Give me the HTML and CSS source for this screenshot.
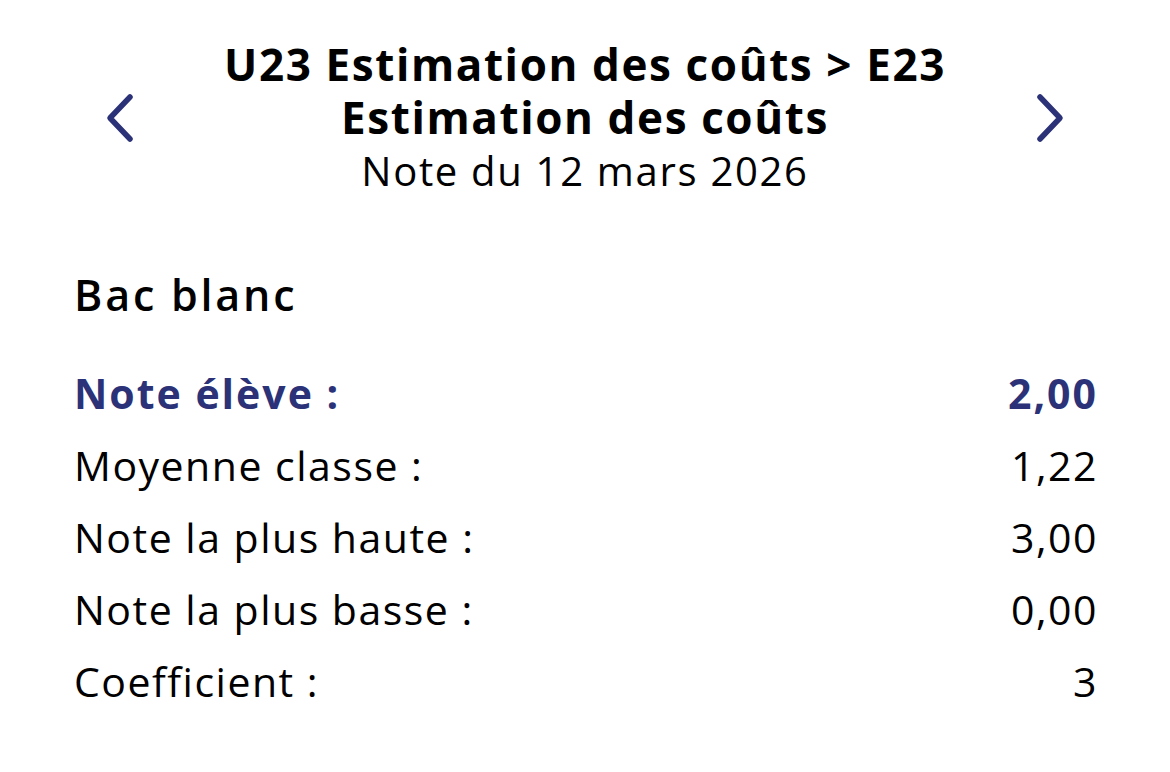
FILE: index.html
```html
<!DOCTYPE html>
<html lang="fr">
<head>
  <meta charset="UTF-8">
  <meta name="viewport" content="width=device-width, initial-scale=1.0">
  <link rel="stylesheet" href="styles.css">
  <title>Note</title>
</head>
<body>
<div class="header">
  <button class="navButton" aria-label="Précédent">
    <svg width="34" height="52" viewBox="0 0 34 52">
      <path d="M28 5 L8 26 L28 47" fill="none" stroke="#2c3277" stroke-width="5.5" stroke-linecap="round" stroke-linejoin="round"/>
    </svg>
  </button>
  <div class="titleBlock">
    <div class="title">U23 Estimation des coûts &gt; E23<br>Estimation des coûts</div>
    <div class="subtitle">Note du 12 mars 2026</div>
  </div>
  <button class="navButton" aria-label="Suivant">
    <svg width="34" height="52" viewBox="0 0 34 52">
      <path d="M6 5 L26 26 L6 47" fill="none" stroke="#2c3277" stroke-width="5.5" stroke-linecap="round" stroke-linejoin="round"/>
    </svg>
  </button>
</div>

<div class="content">
  <h2 class="evalName">Bac blanc</h2>
  <div class="row studentRow">
    <span>Note élève :</span>
    <span class="value">2,00</span>
  </div>
  <div class="row">
    <span>Moyenne classe :</span>
    <span class="value">1,22</span>
  </div>
  <div class="row">
    <span>Note la plus haute :</span>
    <span class="value">3,00</span>
  </div>
  <div class="row">
    <span>Note la plus basse :</span>
    <span class="value">0,00</span>
  </div>
  <div class="row">
    <span>Coefficient :</span>
    <span class="value">3</span>
  </div>
</div>
</body>
</html>
```

FILE: styles.css
```css
body {
  margin: 0;
  background: #fff;
  color: #000;
  font-family: "Open Sans", "Noto Sans", sans-serif;
}

.header {
  display: flex;
  align-items: center;
  justify-content: space-between;
  padding: 38px 102px 0 102px;
}

.navButton {
  border: none;
  background: none;
  padding: 0;
  width: 34px;
  height: 52px;
  cursor: pointer;
}

.titleBlock {
  text-align: center;
}

.title {
  font-size: 44px;
  font-weight: 700;
  line-height: 53px;
  letter-spacing: 1.6px;
}

.subtitle {
  font-size: 40px;
  line-height: 53px;
  letter-spacing: 1.7px;
}

.content {
  padding: 0 74px;
}

.evalName {
  margin: 68px 0 0;
  font-size: 43px;
  font-weight: 600;
  line-height: 60px;
  letter-spacing: 2.8px;
}

.row {
  display: flex;
  justify-content: space-between;
  font-size: 41px;
  line-height: 72px;
  letter-spacing: 1.5px;
}

.value {
  margin-right: -2px;
}

.studentRow {
  margin-top: 32px;
  color: #2c3277;
  font-weight: 700;
  letter-spacing: 2px;
}
```
